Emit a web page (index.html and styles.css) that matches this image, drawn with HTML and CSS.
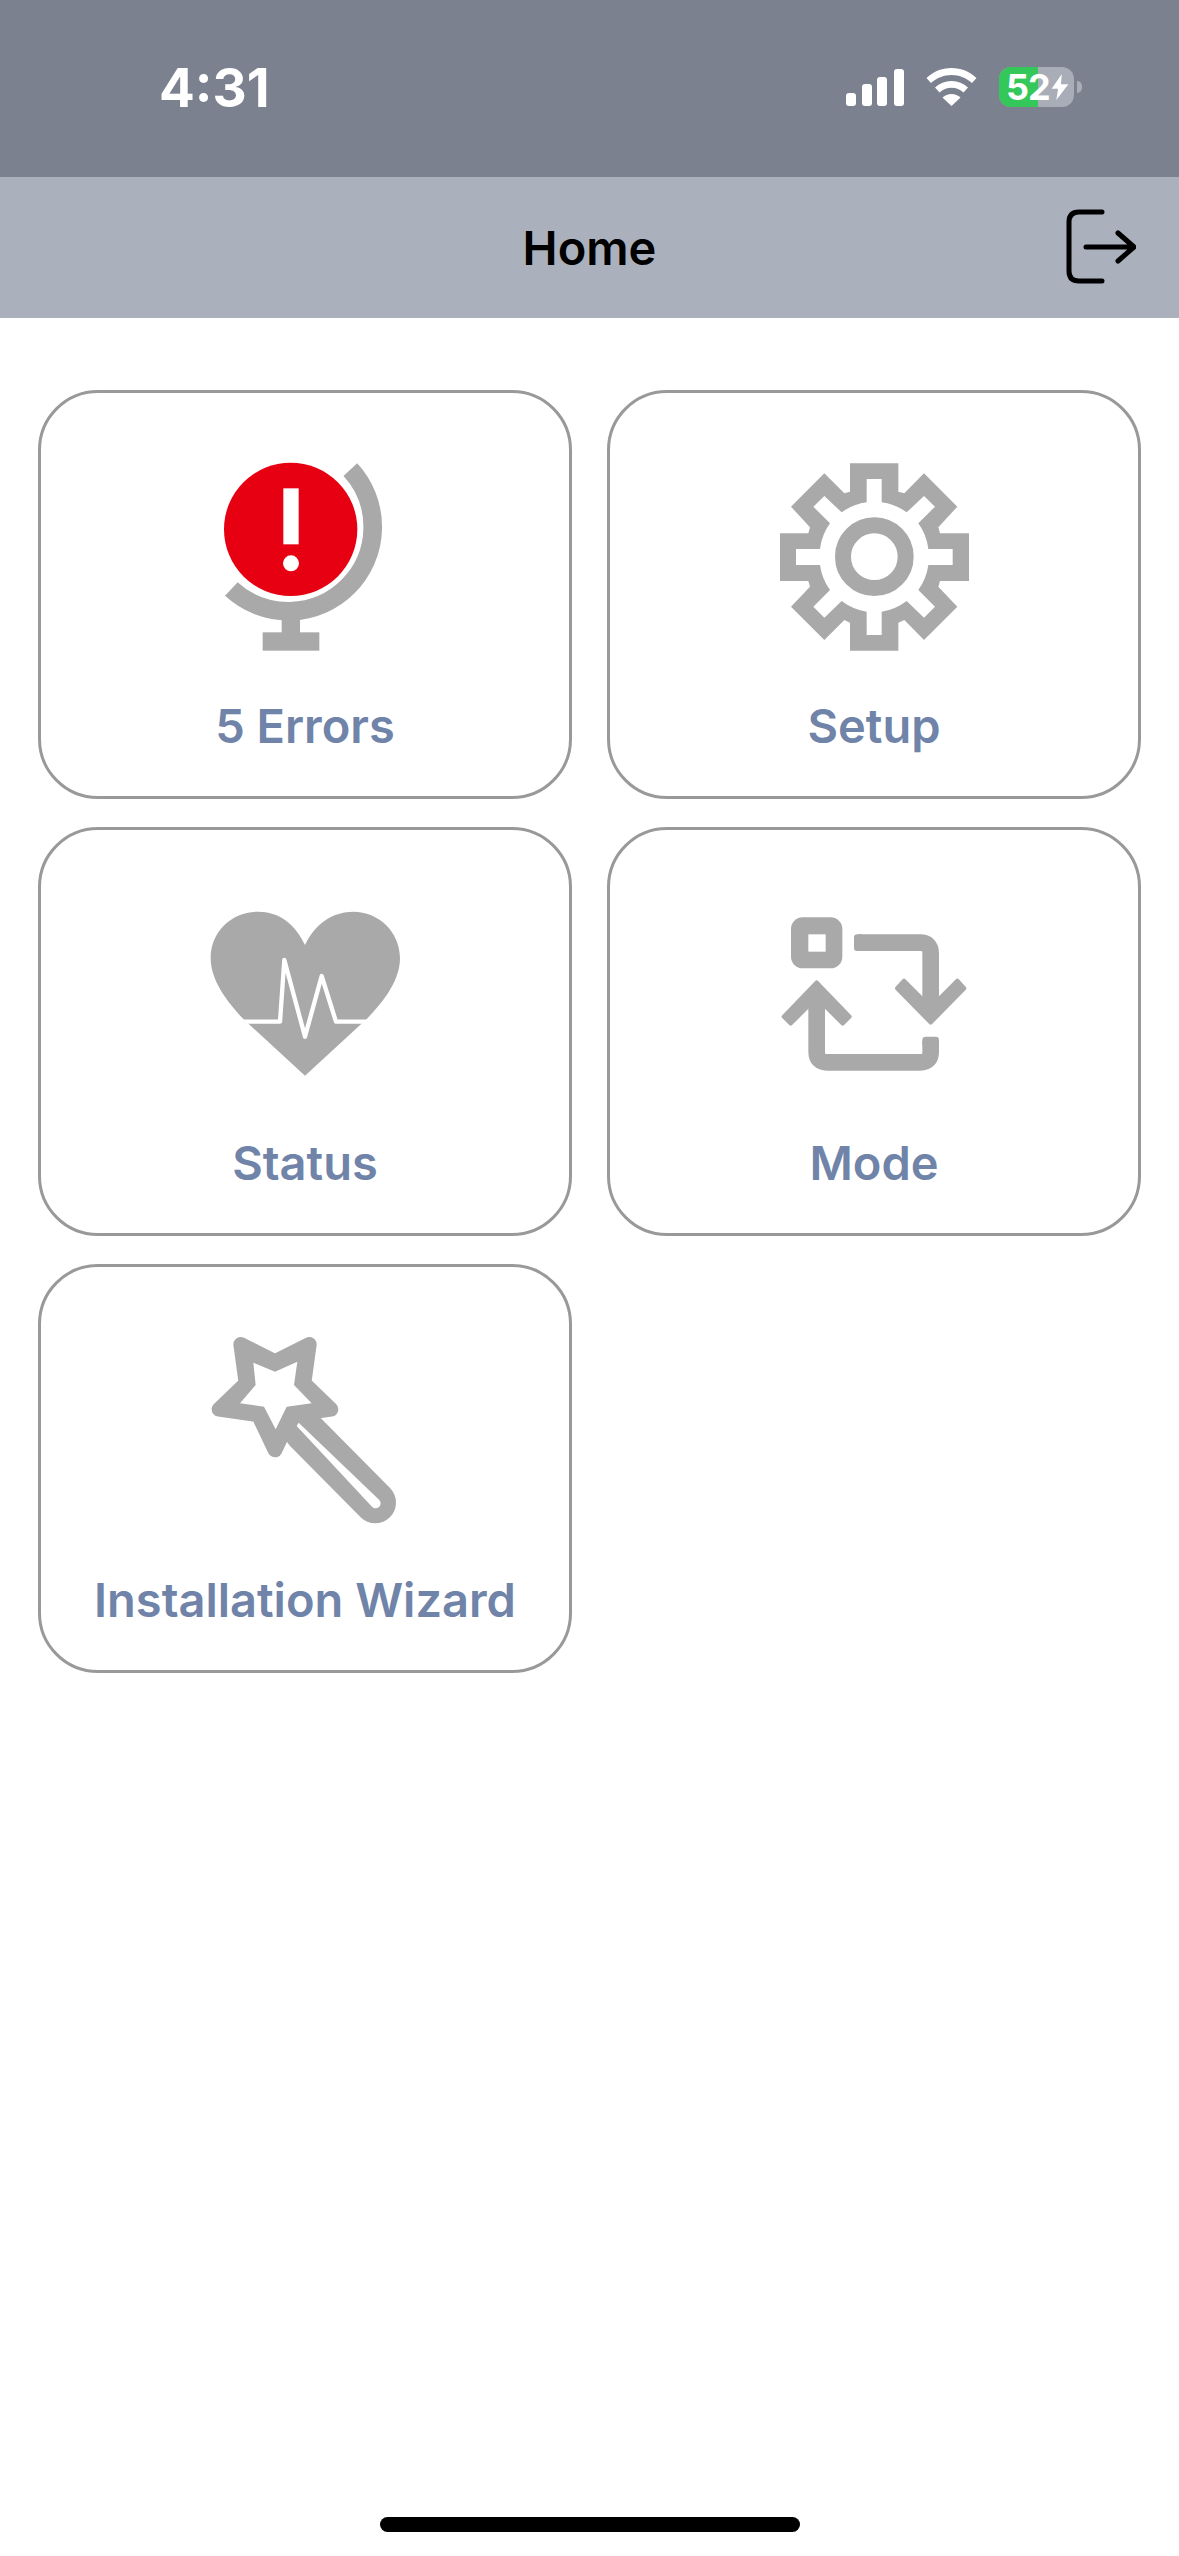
FILE: index.html
```html
<!DOCTYPE html>
<html lang="en">
<head>
<meta charset="utf-8">
<title>Home</title>
<link rel="stylesheet" href="styles.css">
</head>
<body>
<div class="app">
  <header class="statusbar">
    <span class="time">4:31</span>
    <div class="status-icons">
      <svg class="signal" viewBox="0 0 58 37" width="58" height="37"><g fill="#fff"><rect x="0" y="24" width="10" height="13" rx="3"/><rect x="16" y="15" width="10" height="22" rx="3"/><rect x="31" y="8" width="10" height="29" rx="3"/><rect x="48" y="0" width="10" height="37" rx="3"/></g></svg>
      <svg class="wifi" viewBox="0 0 50 38" width="51" height="38"><g fill="#fff"><path d="M25 0C15 0 7 3.500 0 10l4.500 5C10 10 17 7 25 7s15 3 20.500 8L50 10C43 3.500 35 0 25 0z"/><path d="M25 13c-6.500 0-12 2.300-16.500 6.500l4.500 5c3.300-3 7.300-4.700 12-4.700s8.700 1.700 12 4.700l4.500-5C37 15.300 31.500 13 25 13z"/><path d="M25 26c-3.500 0-6.500 1.200-9 3.500L25 38l9-8.500C31.500 27.200 28.500 26 25 26z"/></g></svg>
      <div class="battery">
        <div class="battery-body">
          <div class="battery-fill"></div>
          <span class="battery-text">52</span>
          <svg class="bolt" viewBox="0 0 18 28" width="18" height="26"><path fill="#fff" d="M11 0L0 16h7L5 28 18 11h-8z"/></svg>
        </div>
        <div class="battery-cap"></div>
      </div>
    </div>
  </header>

  <nav class="navbar">
    <h1 class="nav-title">Home</h1>
    <svg class="logout" viewBox="0 0 70 76" width="70" height="76" fill="none" stroke="#000" stroke-width="5" stroke-linecap="round" stroke-linejoin="round">
      <path d="M36 3H13Q3 3 3 13V62Q3 72 13 72H36"/>
      <path d="M20 38H68M52 24L68 38L52 52"/>
    </svg>
  </nav>

  <main class="grid">
    <a class="card">
      <svg class="icon" viewBox="15 -3 660 720">
        <path d="M481 89A253 253 0 0 1 124 447" fill="none" stroke="#a9a9a9" stroke-width="56"/>
        <rect x="275" y="530" width="55" height="50" fill="#a9a9a9"/>
        <rect x="218" y="577" width="170" height="55" fill="#a9a9a9"/>
        <circle cx="302" cy="268" r="200" fill="#e60012"/>
        <rect x="280" y="145" width="46" height="168" fill="#fff"/>
        <circle cx="303" cy="370" r="24" fill="#fff"/>
      </svg>
      <span class="label">5 Errors</span>
    </a>
    <a class="card">
      <svg class="icon" viewBox="12 -3 660 720">
        <path fill="#a9a9a9" fill-rule="evenodd" d="M270 70H415V155L433 160L492 100L592 200L535 262L540 280H627V423H540L535 440L592 500L492 600L433 540L415 548V632H270V548L253 540L193 600L93 500L150 440L145 423H60V280H145L150 262L93 200L193 100L253 160L270 155Z M320 117V187A165 165 0 0 0 245 217L193 168L160 200L210 250A165 165 0 0 0 180 327H108V375H180A165 165 0 0 0 210 450L160 500L193 533L245 483A165 165 0 0 0 320 515V585H365V515A165 165 0 0 0 440 483L492 533L525 500L475 450A165 165 0 0 0 505 375H578V327H505A165 165 0 0 0 475 250L525 200L492 168L440 217A165 165 0 0 0 365 187V117Z"/>
        <circle cx="343" cy="350" r="94" fill="none" stroke="#a9a9a9" stroke-width="48"/>
      </svg>
      <span class="label">Setup</span>
    </a>
    <a class="card">
      <svg class="icon" viewBox="15 -42 660 720">
        <path fill="#a9a9a9" d="M345 165C315 100 265 65 205 65C125 65 62 125 62 205C62 270 110 335 160 387L345 557L530 387C582 335 630 270 630 205C630 125 565 65 490 65C430 65 375 100 345 165Z"/>
        <polyline points="140,395 270,395 283,210 345,440 395,258 438,395 550,395" fill="none" stroke="#fff" stroke-width="13" stroke-linejoin="round"/>
      </svg>
      <span class="label">Status</span>
    </a>
    <a class="card">
      <svg class="icon" viewBox="12 -72 660 720">
        <rect x="93" y="52" width="154" height="153" rx="35" fill="#a9a9a9"/>
        <rect x="145" y="103" width="52" height="52" fill="#fff"/>
        <path d="M295 128H480Q512 128 512 160V340M512 423V455Q512 487 480 487H202Q170 487 170 455V280" fill="none" stroke="#a9a9a9" stroke-width="50" stroke-linecap="butt"/>
        <rect x="282" y="103" width="30" height="50" rx="10" fill="#a9a9a9"/>
        <rect x="487" y="410" width="50" height="30" rx="10" fill="#a9a9a9"/>
        <polygon points="512,368 613,265 592,242 512,322 432,242 411,265" fill="#a9a9a9" stroke="#a9a9a9" stroke-width="12" stroke-linejoin="round"/>
        <polygon points="170,247 269,350 248,371 170,293 92,371 71,350" fill="#a9a9a9" stroke="#a9a9a9" stroke-width="12" stroke-linejoin="round"/>
      </svg>
      <span class="label">Mode</span>
    </a>
    <a class="card">
      <svg class="icon" viewBox="15 -21 660 720">
        <path d="M345 335L556 548" fill="none" stroke="#a9a9a9" stroke-width="124" stroke-linecap="round"/>
        <polygon points="152,73 255,125 358,73 342,190 423,268 305,285 255,390 205,285 87,268 168,190" fill="#a9a9a9" stroke="#a9a9a9" stroke-width="44" stroke-linejoin="round"/>
        <polygon points="190,128 255,155 322,125 312,195 365,250 290,260 257,328 222,260 150,250 197,195" fill="#fff"/>
        <path d="M326 308L568 540A13 13 0 0 1 546 560L320 318Z" fill="#fff"/>
      </svg>
      <span class="label">Installation Wizard</span>
    </a>
  </main>

  <div class="home-indicator"></div>
</div>
</body>
</html>
```
FILE: styles.css
```css
* { box-sizing: border-box; }
html, body { margin: 0; padding: 0; background: #fff; }
body { font-family: Inter, "Liberation Sans", sans-serif; }
.app { width: 1179px; height: 2556px; display: flex; flex-direction: column; position: relative; }

.statusbar { height: 177px; flex: none; background: #7c818f; display: flex; align-items: flex-start; justify-content: space-between; padding: 53px 97px 0 159px; }
.time { color: #fff; font-size: 53px; font-weight: 700; line-height: 70px; }
.status-icons { display: flex; align-items: center; gap: 22px; margin-top: 14px; }
.signal, .wifi { display: block; }
.battery { display: flex; align-items: center; gap: 3px; }
.battery-body { width: 75px; height: 40px; border-radius: 12px; background: #a9adb8; position: relative; display: flex; align-items: center; padding-left: 7px; }
.battery-fill { position: absolute; inset: 0 36px 0 0; background: #34c759; border-radius: 12px 0 0 12px; }
.battery-text { position: relative; color: #fff; font-size: 36px; font-weight: 700; line-height: 40px; letter-spacing: -1px; }
.bolt { position: relative; display: block; margin-left: 1px; flex: none; }
.battery-cap { width: 5px; height: 12px; background: #a9adb8; border-radius: 0 5px 5px 0; }

.navbar { height: 141px; flex: none; background: #aab0bc; display: flex; align-items: center; justify-content: center; position: relative; }
.nav-title { margin: 0; font-size: 47px; font-weight: 600; color: #000; }
.logout { position: absolute; right: 43px; top: 32px; display: block; }

.grid { display: grid; grid-template-columns: 534px 534px; grid-auto-rows: 409px; gap: 28px 35px; padding: 72px 38px 0; }
.card { border: 3px solid #999; border-radius: 60px; background: #fff; display: flex; flex-direction: column; align-items: center; }
.icon { width: 220px; height: 240px; display: block; margin-top: 46px; flex: none; }
.label { font-size: 47px; font-weight: 600; color: #7083a8; line-height: 58px; margin-top: 18px; white-space: nowrap; }

.home-indicator { position: absolute; left: 380px; top: 2517px; width: 420px; height: 15px; border-radius: 8px; background: #000; }
```
